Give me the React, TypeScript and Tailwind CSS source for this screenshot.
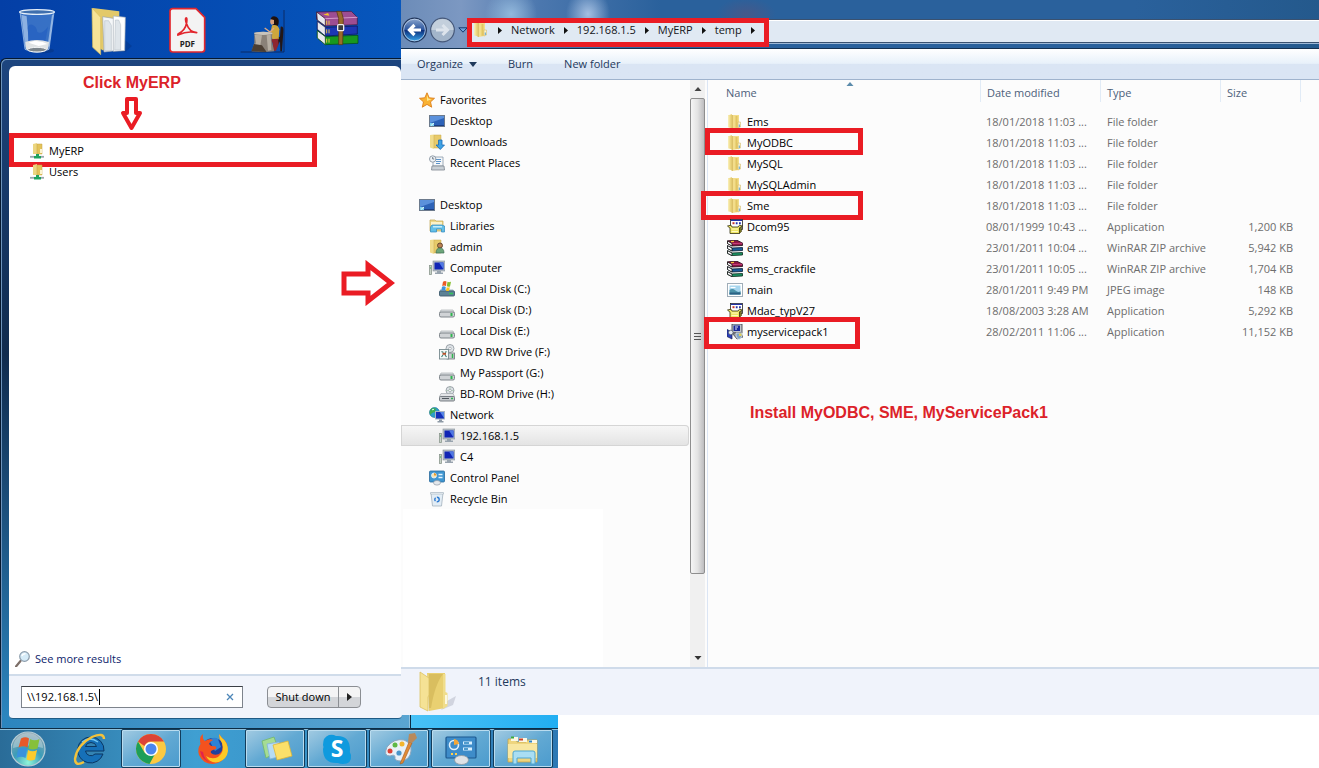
import type { ReactNode } from 'react';
import { clsx } from 'clsx';

/* ---------- small 16px icons ---------- */

function Icon({ children }: { children: ReactNode }) {
  return (
    <svg viewBox="0 0 16 16" className="h-4 w-4 shrink-0" aria-hidden="true">
      {children}
    </svg>
  );
}

function FolderIcon() {
  return (
    <Icon>
      <path d="M1 1.500 5 0v14.500l-4-1.500Z" fill="#ecd680" />
      <path d="M1 1.500 2.500 1v12.500L1 13Z" fill="#f7ebb0" />
      <path d="M5 1h7v13l-7 1Z" fill="#f3dd8a" />
      <path d="M5.200 1v14" stroke="#cdb057" strokeWidth=".9" />
      <path d="M8.500 2h2v11.500l-2 .5Z" fill="#e2c563" />
      <path d="M11 8h2.500v5L11 14Z" fill="#fbf4d0" stroke="#cdb25c" strokeWidth=".5" />
      <path d="M12.300 10.500v2.500" stroke="#5aa2cf" strokeWidth="1" />
    </Icon>
  );
}

function SharedFolderIcon() {
  return (
    <Icon>
      <path d="M4 1 8 0v11l-4 0Z" fill="#ecd680" />
      <path d="M8 1h5v10H8Z" fill="#e3c35a" stroke="#c4a145" strokeWidth=".5" />
      <path d="M11 6h2v4h-2Z" fill="#fbf4d0" />
      <path d="M1 13.800h14" stroke="#9aa7af" strokeWidth="1.800" />
      <path d="M7 11h3v2h2v2.500H5V13h2Z" fill="#1fa35c" />
    </Icon>
  );
}

function StarIcon() {
  return (
    <Icon>
      <path d="m8 .8 2.200 5 5.300.5-4 3.600 1.200 5.300L8 12.400l-4.700 2.800 1.200-5.300-4-3.600 5.300-.5Z" fill="#f9b233" stroke="#dd7f1c" strokeWidth=".9" strokeLinejoin="round" />
      <path d="m8 3 1.300 3.600 3.200.6L8 9Z" fill="#ffe88c" />
    </Icon>
  );
}

function DesktopIcon() {
  return (
    <Icon>
      <rect x=".5" y="2.500" width="15" height="11" fill="#2d63b8" stroke="#6c7a8c" />
      <path d="M1 3h14v2L1 10Z" fill="#5b91dc" />
      <path d="M1 12h14v1H1Z" fill="#1b3f86" />
      <path d="M1 10h4v3H1Z" fill="#7fd3ee" />
      <path d="M2 12.500 5 10" stroke="#fff" strokeWidth=".8" />
    </Icon>
  );
}

function DownloadsIcon() {
  return (
    <Icon>
      <path d="M1 1 5 .5V15l-4-1.500Z" fill="#f1dc8c" />
      <path d="M5 1h7v13H5Z" fill="#e8ca6a" stroke="#c9a94c" strokeWidth=".5" />
      <path d="M9.500 6h3.500v5h2.500L11.300 15.500 7 11h2.500Z" fill="#3ea2e5" stroke="#1c6bb5" strokeWidth=".8" />
    </Icon>
  );
}

function RecentIcon() {
  return (
    <Icon>
      <path d="M4 2h10v9H4Z" fill="#f4f7fa" stroke="#8c9aa8" strokeWidth=".8" />
      <path d="M7 4.500h5M7 6.500h5M7 8.500h4" stroke="#5d94c9" strokeWidth="1" />
      <path d="M3 11h12l.5 4h-13Z" fill="#c9d0d6" stroke="#7d8791" strokeWidth=".8" />
      <circle cx="3.700" cy="4" r="3.200" fill="#eef3f7" stroke="#8995a2" strokeWidth=".9" />
      <path d="M3.700 2v2h1.500" stroke="#55626f" strokeWidth=".8" fill="none" />
    </Icon>
  );
}

function LibrariesIcon() {
  return (
    <Icon>
      <path d="M1 2h5l1 1h7v10H1Z" fill="#eed98b" stroke="#bfa451" strokeWidth=".7" />
      <path d="M2 4h11v3H2Z" fill="#fbf2c9" />
      <path d="M3 7h10l2.500 1v6h-3v-3h-5v3h-6V9Z" fill="#62bfe8" stroke="#3188bd" strokeWidth=".7" />
      <path d="M4 8h9v1.500H4Z" fill="#c4ecfb" />
    </Icon>
  );
}

function UserFolderIcon() {
  return (
    <Icon>
      <path d="M1 1 5 .5V15l-4-1.500Z" fill="#f1dc8c" />
      <path d="M5 1h7v13H5Z" fill="#e8ca6a" stroke="#c9a94c" strokeWidth=".5" />
      <circle cx="11" cy="6.500" r="2.500" fill="#b98052" stroke="#5e4028" strokeWidth=".9" />
      <path d="M7 14c0-3.500 1.500-5 4-5s4 1.500 4 5Z" fill="#6ca57a" stroke="#3d6f53" strokeWidth=".7" />
    </Icon>
  );
}

function ComputerIcon() {
  return (
    <Icon>
      <rect x=".5" y="5.500" width="2" height="9" fill="#c9d3c9" stroke="#8a978d" strokeWidth=".8" />
      <path d="M1 8h1" stroke="#27b04a" />
      <rect x="4" y="1" width="12" height="10" fill="#b5bec7" stroke="#858f99" strokeWidth=".6" />
      <rect x="5.500" y="2.500" width="9" height="7" fill="#1125b5" />
      <path d="M10 2.500h4.500V9.500Z" fill="#4f78e3" />
      <path d="M8 11h4v1.500h2V14H6v-1.500h2Z" fill="#98a3ae" />
    </Icon>
  );
}

function DiskIcon() {
  return (
    <Icon>
      <path d="M2 8h12l1.500 3H.5Z" fill="#dfe2e4" stroke="#9ba1a6" strokeWidth=".6" />
      <rect x=".5" y="10" width="15" height="5" rx="1.500" fill="#d0d3d6" stroke="#757c82" strokeWidth=".9" />
      <path d="M12.500 11v3" stroke="#2fb44f" strokeWidth="2" />
    </Icon>
  );
}

function SystemDiskIcon() {
  return (
    <Icon>
      <path d="M1 8.500h13l1.500 2.500H.5Z" fill="#9fb3c4" />
      <rect x=".5" y="10" width="15" height="5" rx="1" fill="#5c8195" stroke="#3f5c6e" strokeWidth=".9" />
      <path d="M10 12.500h4" stroke="#34c45a" strokeWidth="1.600" />
      <path d="M4 .7Q6-.5 7.500.5L7 5Q5 4 3.200 5Z" fill="#ea5b26" />
      <path d="M8.500.8Q10 1.500 12 .7L11 5.400Q9.500 6 7.800 5.300Z" fill="#86bf2f" />
      <path d="M3 5.800Q5 4.900 6.800 5.900L6.200 9.500Q4 8.800 2.300 9.500Z" fill="#3e92db" />
      <path d="M7.700 6.200Q9 7 10.800 6.200L10 9.800Q8.500 10.300 7 9.700Z" fill="#fbc31a" />
    </Icon>
  );
}

function DvdIcon() {
  return (
    <Icon>
      <circle cx="11" cy="4.500" r="4" fill="#dfe4e8" stroke="#8a9299" strokeWidth=".8" />
      <circle cx="11" cy="4.500" r="1.300" fill="#fff" stroke="#8a9299" strokeWidth=".6" />
      <rect x="8" y="9" width="7.500" height="6" fill="#c9cdd0" stroke="#6e757b" strokeWidth=".8" />
      <path d="M13.500 10v4" stroke="#2fb44f" strokeWidth="1.500" />
      <rect x=".5" y="5.500" width="9" height="9.500" fill="#f5faf9" stroke="#788a8f" strokeWidth=".9" />
      <path d="m2.500 7.500 2 1M7.500 7.500l-1.500 1M2.500 13l1.500-2M7.500 13 6 11" stroke="#3e7d73" strokeWidth="1.200" fill="none" />
      <path d="M3.500 9.800h3.500" stroke="#b3522c" strokeWidth="2" />
    </Icon>
  );
}

function BdIcon() {
  return (
    <Icon>
      <circle cx="11" cy="4.500" r="4" fill="#dfe4e8" stroke="#8a9299" strokeWidth=".8" />
      <path d="M11 .5v8M7 4.500h8" stroke="#a9c3ae" strokeWidth=".8" />
      <circle cx="11" cy="4.500" r="1.300" fill="#fff" stroke="#8a9299" strokeWidth=".6" />
      <path d="M2 7.500h12l1.500 3H.5Z" fill="#e3e5e7" stroke="#9ba1a6" strokeWidth=".6" />
      <rect x=".5" y="10.500" width="15" height="4.500" rx="1" fill="#c5c9cc" stroke="#6e757b" strokeWidth=".9" />
      <path d="M3 12.500h7" stroke="#51585e" strokeWidth="1" />
      <path d="M12 12.500h2" stroke="#2fb44f" strokeWidth="1.400" />
    </Icon>
  );
}

function NetworkIcon() {
  return (
    <Icon>
      <circle cx="5.500" cy="5.500" r="5" fill="#2b9fc9" stroke="#1a6b94" strokeWidth=".6" />
      <path d="M2 2q3-2 5 0l-1 3-3 1-1.500 2Q-.5 5 2 2Z" fill="#3fae54" />
      <path d="M3 3q1-1 2-.5" stroke="#d8f5fb" fill="none" />
      <rect x="6.500" y="4.500" width="9" height="7.500" fill="#1330b8" stroke="#a9b6c4" />
      <path d="M11 5h4v6Z" fill="#5585e6" />
      <path d="M10 12.500h3v1.500h1.500v1.500H8.500V14H10Z" fill="#8d99a5" />
    </Icon>
  );
}

function ControlPanelIcon() {
  return (
    <Icon>
      <rect x=".5" y="1" width="15" height="11" rx="1" fill="#3f96d0" stroke="#2a6a9c" strokeWidth=".8" />
      <circle cx="5" cy="5.500" r="2.500" fill="#f4e4b4" stroke="#e9f6ff" strokeWidth=".8" />
      <path d="M5 5.500V3a2.500 2.500 0 0 1 2.500 2.500Z" fill="#e79a2c" />
      <path d="M9.500 4.500h4M9.500 7.500h4" stroke="#e2f3ff" strokeWidth="1.400" />
      <ellipse cx="8" cy="12.800" rx="3.500" ry="2.300" fill="#e4e8ec" stroke="#8f9aa5" strokeWidth=".7" />
    </Icon>
  );
}

function RecycleIcon() {
  return (
    <Icon>
      <path d="m2 2 1.500 13h9L14 2Z" fill="#e3edf5" stroke="#a3b1bd" strokeWidth=".8" />
      <path d="M1.500 1.500h13v1.500h-13Z" fill="#f7fafc" stroke="#a3b1bd" strokeWidth=".6" />
      <circle cx="8" cy="8.500" r="2.200" fill="none" stroke="#2d7ad1" strokeWidth="1.400" strokeDasharray="3.400 1.200" />
    </Icon>
  );
}

function InstallerIcon() {
  return (
    <Icon>
      <rect x="3.500" y=".5" width="12" height="10" fill="#fff" stroke="#222" strokeWidth=".8" />
      <path d="M4 1.400h11" stroke="#2433a8" strokeWidth="1.200" />
      <path d="M5.500 4.200h2" stroke="#c8332b" strokeWidth="2" />
      <path d="M8.800 4.200h1.800M12 4.200h1.800" stroke="#2433a8" strokeWidth="2" />
      <path d="M.5 7 4 6.200l1 1.800h6l1.500-1.800 3 .8-3 1.800v5.700H3V9.200Z" fill="#efe663" stroke="#33310f" strokeWidth=".8" strokeLinejoin="round" />
      <path d="M4.500 10h6.500M4.500 12.500h6.500" stroke="#fffbc2" strokeWidth="1.200" />
      <path d="M12.500 9v5.500l2-2V8Z" fill="#7c7622" stroke="#33310f" strokeWidth=".5" />
    </Icon>
  );
}

function RarIcon() {
  return (
    <Icon>
      <path d="M.5.800 10 .3l5.500 2.700v2.500L5 6 .5 3.500Z" fill="#8d1646" stroke="#1c0711" strokeWidth=".8" />
      <path d="M.5 1v2.500L5 6V3.500Z" fill="#fff" stroke="#111" strokeWidth=".8" />
      <path d="m5.500 3.600 10-.4" stroke="#d84e8b" strokeWidth=".8" />
      <path d="M.5 5.700 5 8l10.500-.5v3L5 11 .5 8.500Z" fill="#1b5b98" stroke="#081a33" strokeWidth=".8" />
      <path d="M.5 5.700v2.800L5 11V8Z" fill="#fff" stroke="#111" strokeWidth=".8" />
      <path d="M.5 10.700 5 13l10.500-.5V15L5 15.600l-4.500-2.300Z" fill="#1c9464" stroke="#082a1b" strokeWidth=".8" />
      <path d="M.5 10.700v2.600L5 15.600V13Z" fill="#fff" stroke="#111" strokeWidth=".8" />
      <path d="m4 1.600 3-.2" stroke="#f3c33c" strokeWidth="1.300" />
    </Icon>
  );
}

function ImageIcon() {
  return (
    <Icon>
      <rect x=".5" y="1.500" width="15" height="13" fill="#fff" stroke="#9fadb8" />
      <rect x="2.500" y="3.500" width="11" height="9" fill="#a5d5ee" />
      <path d="M2.500 8q3-2 6 .5t5 .5v3.500h-11Z" fill="#4a91a8" />
      <path d="M2.500 10.500h11v2h-11Z" fill="#2a6184" />
      <path d="M3.500 5.500h5" stroke="#fff" strokeWidth="1.200" />
    </Icon>
  );
}

function ServicePackIcon() {
  return (
    <Icon>
      <rect x="5" y="0" width="10" height="9" fill="#bfc4cb" stroke="#33363d" strokeWidth=".8" />
      <rect x="6.500" y="1.500" width="6.500" height="5.500" fill="#1b2a9b" />
      <path d="M8 3h3M8 5h2" stroke="#fff" strokeWidth=".9" />
      <path d="M5 9h9l2 4-6 2Z" fill="#8a9099" stroke="#33363d" strokeWidth=".7" />
      <path d="M0 5.500 5 8v7l-5-2.500Z" fill="#2b40c0" stroke="#161c4d" strokeWidth=".7" />
      <circle cx="3.800" cy="8.500" r="2.300" fill="#e3e9f0" stroke="#4b5563" strokeWidth=".7" />
      <path d="M9 9h6v3q-1 2.500-3 3.500-2-1-3-3.500Z" fill="#7fa3c6" stroke="#dfe6ec" strokeWidth=".8" />
      <path d="M12 9.500h2.500V12H12Z" fill="#e4cf56" />
    </Icon>
  );
}

/* ---------- desktop shortcuts ---------- */

function DesktopShortcut({ label, offset, children }: { label: string; offset: number; children: ReactNode }) {
  return (
    <button aria-label={label} className="h-[58px] w-[75px] shrink-0">
      <svg viewBox={`${offset} 0 225 174`} className="block h-full w-full">
        {children}
      </svg>
    </button>
  );
}

function DesktopShortcuts() {
  return (
    <div className="flex h-[58px] overflow-hidden">
      <DesktopShortcut label="Recycle Bin" offset={0}>
        <ellipse cx="128" cy="152" rx="34" ry="8" fill="#06327c" opacity=".5" />
        <path d="m60 36 15 112q36 18 72 0l15-112Z" fill="#6aa0e2" fillOpacity=".5" stroke="#bcd6f3" strokeWidth="2" />
        <path d="m64 44 12 98 12 5-8-98ZM156 44l-14 98 6-3 12-95Z" fill="#e4f1fd" opacity=".5" />
        <path d="M84 92q-4-20 12-18 14 4 16 22 14 8 32-16l-8 44H84Z" fill="#1f5cc0" opacity=".6" />
        <ellipse cx="111" cy="36" rx="52" ry="7" fill="#3f6fae" stroke="#e6f0fa" strokeWidth="4" />
        <path d="m76 126q34-12 71 0l-3 22q-32 14-66 0Z" fill="#dfe3e4" />
        <path d="m86 128 18-6 24 4 14 6-26 6Z" fill="#fff" />
        <ellipse cx="111" cy="149" rx="28" ry="7" fill="#7d868c" stroke="#f5f7f8" strokeWidth="3" />
      </DesktopShortcut>
      <DesktopShortcut label="Documents" offset={225}>
        <path d="m372 118 24 20-20 18h-40Z" fill="#06327c" opacity=".4" />
        <path d="m278 24 80 10v20l-48 98-30-20Z" fill="#e3c969" />
        <path d="m308 50 38 6v96l-34 4Z" fill="#f5f7f9" stroke="#98a3ae" strokeWidth="2" />
        <path d="m340 48 36 4-2 100-34 2Z" fill="#fff" stroke="#a8b1ba" strokeWidth="2" />
        <path d="M314 62h12l8 14v76h-20ZM346 60h10l6 14v76h-18Z" fill="#dfe5ea" stroke="#aeb8c1" strokeWidth="1.500" />
        <path d="m276 24 26 28v112l-24-22Z" fill="#f6e397" stroke="#d8bc5c" strokeWidth="2" />
      </DesktopShortcut>
      <DesktopShortcut label="PDF reader" offset={450}>
        <path d="M518 26h70l26 26v96q0 8-8 8h-88q-8 0-8-8V34q0-8 8-8Z" fill="#f3f3f3" stroke="#e2262d" strokeWidth="5" />
        <path d="M534 102q22-10 26-34 2-16-2-14t2 18q8 24 30 26-28-6-54 6-4 4-2-2Z" fill="none" stroke="#e2262d" strokeWidth="5" strokeLinejoin="round" />
        <text x="562" y="140" textAnchor="middle" className="fill-[#222] font-['Open_Sans'] text-[24px] font-bold">PDF</text>
      </DesktopShortcut>
      <DesktopShortcut label="Table" offset={675}>
        <path d="M722 156h130V30" fill="none" stroke="#0a2a66" strokeWidth="3" />
        <path d="M842 80q10-2 8 16l-4 58h-5l-1-30-16 28h-4l8-38 12-4Z" fill="#231717" />
        <path d="M812 56q4-10 16-6 10 4 8 18 0 10-6 12l-10-6Z" fill="#1f110d" />
        <path d="M812 58q-4 10 2 16l8-2v-12Z" fill="#d9a07b" />
        <path d="M816 76q18-4 22 12l-2 30-18 4-6-26Z" fill="#cfa63c" />
        <path d="m822 84-12 12-16-12" fill="none" stroke="#dca883" strokeWidth="4" />
        <path d="m812 118 22-2 2 16-8 20h-8l-2-22Z" fill="#8e2530" />
        <path d="M763 98q26-6 54 0l-2 24 8 32-26 2-42-2 8-26Z" fill="#8a8178" />
        <ellipse cx="790" cy="100" rx="28" ry="5" fill="#c9c4bc" />
        <path d="m764 104 4 24-12 24 22 2 8-48ZM800 106l4 46 10-2-2-46Z" fill="#b5ada2" />
        <path d="m762 132-8 22 46 2-14-20Z" fill="#4b3e33" />
      </DesktopShortcut>
      <DesktopShortcut label="WinRAR" offset={900}>
        <path d="m950 36 104-2 18 18v22l-96 4-26-20Z" fill="#9d4d92" stroke="#3c173a" strokeWidth="2" />
        <path d="m950 36 26 20v22l-24-18Z" fill="#e9e9ee" stroke="#241025" strokeWidth="2" />
        <path d="m976 56 96-4" stroke="#d59acb" strokeWidth="3" />
        <path d="m952 64 24 18 96-4v24l-96 6-24-20Z" fill="#1c36b4" stroke="#0c1450" strokeWidth="2" />
        <path d="m952 64 24 18v26l-24-20Z" fill="#e9e9ee" stroke="#0c1450" strokeWidth="2" />
        <path d="m952 92 24 18 98-4v24l-98 4-24-20Z" fill="#18981f" stroke="#064a0c" strokeWidth="2" />
        <path d="m952 92 24 18v24l-24-20Z" fill="#e9e9ee" stroke="#064a0c" strokeWidth="2" />
        <path d="M1010 34h14l6 22-2 78h-12V56Z" fill="#9b6a2b" stroke="#4c3110" strokeWidth="2" />
        <rect x="1013" y="74" width="18" height="18" rx="3" fill="#3b3b3b" stroke="#ececec" strokeWidth="4" />
        <path d="M980 62v12M987 62v12M980 88v12M987 88v12M980 116v12M987 116v12" stroke="#e6c548" strokeWidth="3" />
        <path d="m970 44 14-5 4 8Z" fill="#f2c72c" />
      </DesktopShortcut>
    </div>
  );
}

/* ---------- start menu ---------- */

function MenuResult({ label, marked }: { label: string; marked?: boolean }) {
  return (
    <button className="relative flex h-[21px] w-full items-center gap-1 pl-5 text-left">
      <SharedFolderIcon />
      <span>{label}</span>
      {marked && <span className="absolute -top-[7px] left-0 h-[34px] w-[308px] border-[5px] border-[#ea1c24]" />}
    </button>
  );
}

function StartMenu() {
  return (
    <div className="flex flex-1 flex-col rounded-tl-md border-t border-l border-[#06182e] bg-linear-to-b from-[#1d457f] via-[#102b4e] via-45% to-[#2b85be] pt-[7px] pl-2 shadow-[inset_1px_1px_0_#6d93bb]">
      <div className="flex flex-1 flex-col rounded-t-md bg-white">
        <div className="flex flex-col items-start pt-[7px] pl-[74px]">
          <h1 className="font-['Liberation_Sans',sans-serif] text-base leading-5 font-bold text-[#dc2229]">Click MyERP</h1>
          <svg viewBox="0 0 24 36" className="mt-[3px] ml-9 h-9 w-6">
            <path d="M8 3h9v14h4l-8.500 15L4 17h4Z" fill="#fff" stroke="#ea1c24" strokeWidth="4" strokeLinejoin="round" />
          </svg>
        </div>
        <div className="mt-2 flex flex-col">
          <MenuResult label="MyERP" marked />
          <MenuResult label="Users" />
        </div>
        <a href="#results" className="mt-auto flex h-[31px] items-center gap-1 px-[6px] text-[#0b1b6b]">
          <svg viewBox="0 0 16 16" className="h-4 w-4">
            <path d="M1 15.500 5.500 10" stroke="#7d6f68" strokeWidth="2.200" strokeLinecap="round" />
            <circle cx="9.500" cy="5.500" r="4.800" fill="#d5ebf8" stroke="#8c9cab" strokeWidth="1.200" />
            <path d="M6.800 5q1-2.500 3.700-2.300" stroke="#fff" strokeWidth="1.400" fill="none" />
          </svg>
          See more results
        </a>
        <div className="flex h-[41px] items-center border-t-2 border-[#d0dcea] bg-[#f1f4fb] pt-[2px] pl-3">
          <label className="relative flex h-[22px] w-[222px] items-center border border-[#7d838c] border-t-[#3b3f45] bg-white">
            <input aria-label="Search programs and files" defaultValue={'\\\\192.168.1.5\\'} className="min-w-0 flex-1 bg-transparent pl-[5px] outline-none" />
            <span className="absolute left-[77px] h-4 w-px bg-black" />
            <svg viewBox="0 0 8 8" className="mr-2 h-2 w-2">
              <path d="m1 1 6 6M7 1 1 7" stroke="#4d86b8" strokeWidth="1.300" />
            </svg>
          </label>
          <div className="ml-6 flex h-[22px] rounded-sm border border-[#8b8e93] bg-linear-to-b from-[#f4f4f5] from-50% to-[#d3d5d9] to-50%">
            <button className="w-[71px] border-r border-[#8b8e93]">Shut down</button>
            <button aria-label="More options" className="flex w-[21px] items-center justify-center">
              <svg viewBox="0 0 5 8" className="h-2 w-[5px]">
                <path d="m0 0 5 4-5 4Z" fill="#222" />
              </svg>
            </button>
          </div>
        </div>
      </div>
    </div>
  );
}

/* ---------- explorer ---------- */

function Crumb({ label }: { label?: string }) {
  return (
    <>
      {label && <button>{label}</button>}
      <svg viewBox="0 0 4 7" className="h-[7px] w-1">
        <path d="m0 0 4 3.500L0 7Z" fill="#111" />
      </svg>
    </>
  );
}

function AddressBar() {
  return (
    <div className="flex h-12 items-end bg-[radial-gradient(ellipse_26px_26px_at_110px_14px,#92b8dc,transparent),radial-gradient(ellipse_22px_26px_at_187px_14px,#a5c0e2,transparent),radial-gradient(ellipse_30px_16px_at_345px_14px,#45598a,transparent),linear-gradient(90deg,#6c8cb8,#7c98c2_60px,#4b77ae_140px,#2a619c_260px,#2a619c_80%,#24598c)] pb-[5px]">
      <div className="flex items-center">
        <button aria-label="Back">
          <svg viewBox="0 0 26 26" className="block h-[26px] w-[26px]">
            <defs>
              <linearGradient id="back" x1="0" y1="0" x2="0" y2="1">
                <stop offset="0" stopColor="#8fa9cf" />
                <stop offset=".48" stopColor="#2b559e" />
                <stop offset=".5" stopColor="#0b2b78" />
                <stop offset="1" stopColor="#38a9ee" />
              </linearGradient>
            </defs>
            <circle cx="13.500" cy="13" r="11.800" fill="url(#back)" stroke="#23375c" strokeWidth="1.300" />
            <circle cx="13.500" cy="13" r="10.800" fill="none" stroke="#c4d6ec" strokeWidth=".8" />
            <path d="M20 13H8.500m5-5-5 5 5 5" fill="none" stroke="#fff" strokeWidth="3.200" />
          </svg>
        </button>
        <button aria-label="Forward" className="ml-[2px]">
          <svg viewBox="0 0 26 26" className="block h-[26px] w-[26px]">
            <circle cx="13.500" cy="13" r="11.800" fill="#a3b5ca" stroke="#47597a" strokeWidth="1.200" />
            <path d="M2.500 13a11 11 0 0 1 22 0Z" fill="#c3cfdc" />
            <path d="M7 13h11.500m-5-5 5 5-5 5" fill="none" stroke="#dde4ec" strokeWidth="3" />
          </svg>
        </button>
        <button aria-label="Recent pages" className="ml-[3px]">
          <svg viewBox="0 0 10 6" className="h-[6px] w-[10px]">
            <path d="M.8.8h8.400L5 5.200Z" fill="#6fa3dc" stroke="#173a6e" strokeWidth="1" />
          </svg>
        </button>
      </div>
      <nav aria-label="Address" className="relative ml-[2px] flex h-6 flex-1 items-center gap-[9px] border-y border-[#3a516f] bg-[#e0e9f3] pb-[2px] pl-[3px] text-[#14161a] shadow-[inset_0_1px_0_#fff,0_1px_0_#9db8d6]">
        <FolderIcon />
        <Crumb />
        <Crumb label="Network" />
        <Crumb label="192.168.1.5" />
        <Crumb label="MyERP" />
        <Crumb label="temp" />
        <span className="absolute -top-[2px] left-[-3px] h-[29px] w-[302px] border-[5px] border-[#ea1c24]" />
      </nav>
    </div>
  );
}

function CommandBar() {
  return (
    <div className="flex h-8 items-center gap-[31px] border-t border-b border-t-[#14304f] border-b-[#9fb3cd] bg-linear-to-b from-white via-[#e8f1fa] via-48% to-[#dae5f4] to-50% pl-4 text-[#1e395b]">
      <button className="flex items-center gap-[6px]">
        Organize
        <svg viewBox="0 0 8 5" className="h-[5px] w-2">
          <path d="M0 0h8L4 5Z" fill="#1e395b" />
        </svg>
      </button>
      <button>Burn</button>
      <button>New folder</button>
    </div>
  );
}

interface TreeItemProps {
  icon: ReactNode;
  label: string;
  level?: 0 | 1 | 2;
  selected?: boolean;
}

const indent = ['pl-[18px]', 'pl-7', 'pl-[38px]'];

function TreeItem({ icon, label, level = 0, selected }: TreeItemProps) {
  return (
    <button
      className={clsx(
        'flex h-[21px] w-[288px] shrink-0 items-center gap-[5px] text-left',
        indent[level],
        selected && 'rounded-r-sm bg-linear-to-b from-[#f7f7f7] to-[#e3e3e3] shadow-[inset_0_0_0_1px_#d5d5d5]'
      )}
    >
      {icon}
      <span>{label}</span>
    </button>
  );
}

function NavigationPane() {
  return (
    <nav className="flex w-[289px] shrink-0 flex-col bg-[#fcfcfc] pt-[9px]">
      <TreeItem icon={<StarIcon />} label="Favorites" />
      <TreeItem icon={<DesktopIcon />} label="Desktop" level={1} />
      <TreeItem icon={<DownloadsIcon />} label="Downloads" level={1} />
      <TreeItem icon={<RecentIcon />} label="Recent Places" level={1} />
      <div className="h-[21px]" />
      <TreeItem icon={<DesktopIcon />} label="Desktop" />
      <TreeItem icon={<LibrariesIcon />} label="Libraries" level={1} />
      <TreeItem icon={<UserFolderIcon />} label="admin" level={1} />
      <TreeItem icon={<ComputerIcon />} label="Computer" level={1} />
      <TreeItem icon={<SystemDiskIcon />} label="Local Disk (C:)" level={2} />
      <TreeItem icon={<DiskIcon />} label="Local Disk (D:)" level={2} />
      <TreeItem icon={<DiskIcon />} label="Local Disk (E:)" level={2} />
      <TreeItem icon={<DvdIcon />} label="DVD RW Drive (F:)" level={2} />
      <TreeItem icon={<DiskIcon />} label="My Passport (G:)" level={2} />
      <TreeItem icon={<BdIcon />} label="BD-ROM Drive (H:)" level={2} />
      <TreeItem icon={<NetworkIcon />} label="Network" level={1} />
      <TreeItem icon={<ComputerIcon />} label="192.168.1.5" level={2} selected />
      <TreeItem icon={<ComputerIcon />} label="C4" level={2} />
      <TreeItem icon={<ControlPanelIcon />} label="Control Panel" level={1} />
      <TreeItem icon={<RecycleIcon />} label="Recycle Bin" level={1} />
      <div className="ml-[2px] w-[200px] flex-1 bg-white" />
    </nav>
  );
}

function ScrollTrack() {
  return (
    <div className="flex w-[15px] shrink-0 flex-col items-center bg-[#f0f0f0]">
      <svg viewBox="0 0 8 4" className="my-[7px] h-1 w-2">
        <path d="m4 0 3.500 4h-7Z" fill="#444" />
      </svg>
      <div className="flex w-full flex-[477] flex-col items-center justify-center gap-[2px] rounded-xs border border-[#8e8e8e] bg-linear-to-r from-[#f5f5f5] via-[#e3e3e3] to-[#bdbdc0]">
        <span className="h-px w-[7px] bg-[#555]" />
        <span className="h-px w-[7px] bg-[#555]" />
        <span className="h-px w-[7px] bg-[#555]" />
      </div>
      <div className="flex-[78]" />
      <svg viewBox="0 0 8 4" className="mt-1 mb-[7px] h-1 w-2">
        <path d="m4 4 3.500-4h-7Z" fill="#333" />
      </svg>
    </div>
  );
}

interface FileRow {
  name: string;
  date: string;
  type: string;
  size?: string;
  icon: ReactNode;
  mark?: string;
}

const files: FileRow[] = [
  { name: 'Ems', date: '18/01/2018 11:03 ...', type: 'File folder', icon: <FolderIcon /> },
  { name: 'MyODBC', date: '18/01/2018 11:03 ...', type: 'File folder', icon: <FolderIcon />, mark: '-top-1 -left-[3px] h-[27px] w-[158px]' },
  { name: 'MySQL', date: '18/01/2018 11:03 ...', type: 'File folder', icon: <FolderIcon /> },
  { name: 'MySQLAdmin', date: '18/01/2018 11:03 ...', type: 'File folder', icon: <FolderIcon /> },
  { name: 'Sme', date: '18/01/2018 11:03 ...', type: 'File folder', icon: <FolderIcon />, mark: '-top-1 -left-[7px] h-[29px] w-[162px]' },
  { name: 'Dcom95', date: '08/01/1999 10:43 ...', type: 'Application', size: '1,200 KB', icon: <InstallerIcon /> },
  { name: 'ems', date: '23/01/2011 10:04 ...', type: 'WinRAR ZIP archive', size: '5,942 KB', icon: <RarIcon /> },
  { name: 'ems_crackfile', date: '23/01/2011 10:05 ...', type: 'WinRAR ZIP archive', size: '1,704 KB', icon: <RarIcon /> },
  { name: 'main', date: '28/01/2011 9:49 PM', type: 'JPEG image', size: '148 KB', icon: <ImageIcon /> },
  { name: 'Mdac_typV27', date: '18/08/2003 3:28 AM', type: 'Application', size: '5,292 KB', icon: <InstallerIcon /> },
  { name: 'myservicepack1', date: '28/02/2011 11:06 ...', type: 'Application', size: '11,152 KB', icon: <ServicePackIcon />, mark: '-top-1 -left-1 h-8 w-[156px]' },
];

function FileList() {
  return (
    <div className="min-w-0 flex-1 border-l border-[#dbe5f4] bg-[#fcfcfc]">
      <table className="w-full table-fixed text-left">
        <colgroup>
          <col className="w-[272px]" />
          <col className="w-[120px]" />
          <col className="w-[120px]" />
          <col className="w-[80px]" />
          <col />
        </colgroup>
        <thead>
          <tr className="h-[31px] text-[#4c607a]">
            <th className="relative p-0 pl-[18px] align-top font-normal">
              <div className="pt-[5px] leading-4">Name</div>
              <svg viewBox="0 0 8 4" className="absolute top-[2px] left-[138px] h-1 w-2">
                <path d="m4 0 3.500 4h-7Z" fill="#5b8bab" />
              </svg>
            </th>
            {['Date modified', 'Type', 'Size'].map((title) => (
              <th key={title} className="p-0 align-top font-normal">
                <div className="h-[22px] border-l border-[#e1ebf6] pt-[5px] pl-[6px] leading-4">{title}</div>
              </th>
            ))}
            <th aria-hidden="true" className="p-0 align-top">
              <div className="h-[22px] border-l border-[#e1ebf6]" />
            </th>
          </tr>
        </thead>
        <tbody>
          {files.map(({ name, date, type, size, icon, mark }) => (
            <tr key={name} className="h-[21px] text-[#6d6d6d]">
              <td className="relative p-0 text-black">
                <div className="flex items-center gap-1 pl-[19px]">
                  {icon}
                  <span>{name}</span>
                </div>
                {mark && <span className={clsx('absolute border-[5px] border-[#ea1c24]', mark)} />}
              </td>
              <td className="p-0 pl-[6px] whitespace-nowrap">{date}</td>
              <td className="p-0 pl-[7px] whitespace-nowrap">{type}</td>
              <td className="p-0 pr-[7px] text-right whitespace-nowrap">{size}</td>
              <td />
            </tr>
          ))}
        </tbody>
      </table>
      <p className="mt-[61px] ml-[42px] font-['Liberation_Sans',sans-serif] text-base leading-5 font-bold text-[#dc2229]">
        Install MyODBC, SME, MyServicePack1
      </p>
    </div>
  );
}

function DetailsPane() {
  return (
    <footer className="flex h-12 items-start border-t-2 border-[#cfdbea] bg-[#f0f3fb] pl-[18px] text-xs text-[#1e395b]">
      <svg viewBox="0 0 40 44" className="h-11 w-10">
        <path d="m28 32 9-5-3 9-12 5Z" fill="#aab0bc" opacity=".45" />
        <path d="M8 4h18v35l-16 3Z" fill="#e9d071" />
        <path d="M10 5h14q-8 10-12 34h-2Z" fill="#c5a84a" opacity=".45" />
        <path d="M24 5h2.500v18l2 1v13l-4.500 3Z" fill="#f0dd8b" />
        <path d="M26 26h2v9h-2Z" fill="#fdf9e0" />
        <path d="m1 3 9 6v17l-1 2v14l-8-4Z" fill="#f5e295" stroke="#dcc263" strokeWidth=".8" />
      </svg>
      <p className="mt-[5px] ml-[19px]">11 items</p>
    </footer>
  );
}

function Explorer() {
  return (
    <main className="relative flex min-w-0 flex-1 flex-col">
      <AddressBar />
      <CommandBar />
      <div className="flex flex-1">
        <NavigationPane />
        <ScrollTrack />
        <div className="w-[2px] bg-[#fcfcfc]" />
        <FileList />
      </div>
      <DetailsPane />
      <svg viewBox="0 0 54 46" className="absolute top-[260px] -left-[60px] h-[46px] w-[54px]">
        <path d="M3 14h24V5l23 18-23 18v-8H3Z" fill="#fff" stroke="#ea1c24" strokeWidth="5" />
      </svg>
    </main>
  );
}

/* ---------- taskbar ---------- */

function TaskButton({ label, running, children }: { label: string; running?: boolean; children: ReactNode }) {
  return (
    <button
      aria-label={label}
      className={clsx(
        'flex w-[60px] shrink-0 items-center justify-center rounded-xs',
        running && 'border border-[#123d5c] bg-linear-to-br from-[#a2cbe2] via-[#62a9d3] to-[#4b9bcd] shadow-[inset_0_0_0_1px_#b9dcef]'
      )}
    >
      <svg viewBox="0 0 36 36" className="h-9 w-9">
        {children}
      </svg>
    </button>
  );
}

function Taskbar() {
  return (
    <div className="flex h-10 w-[558px] gap-[2px] border-t border-[#0d2c44] bg-linear-to-r from-[#2a6c98] via-[#3f9fd2] via-35% to-[#2c78b4] shadow-[inset_0_1px_0_#8fc1dd]">
      <button aria-label="Start" className="flex w-[57px] shrink-0 items-center justify-center">
        <svg viewBox="0 0 36 36" className="h-9 w-9">
          <defs>
            <radialGradient id="orb" cx=".5" cy=".9" r=".85">
              <stop offset="0" stopColor="#8ff5d8" />
              <stop offset=".5" stopColor="#3b9cb8" />
              <stop offset="1" stopColor="#8aa5b1" />
            </radialGradient>
          </defs>
          <circle cx="17" cy="18" r="17" fill="url(#orb)" stroke="#b5ccd6" strokeWidth="1.200" />
          <path d="M2 17a15 15 0 0 1 30 0Q17 12 2 17Z" fill="#fff" opacity=".3" />
          <path d="M10 7.500q4.500-2.500 8 0l-1.500 9q-4-2.500-9 0Z" fill="#e8592a" />
          <path d="M19 8q4.500 2.500 9.500 0l-2 9.500q-4.500 2-9 0Z" fill="#86c03a" />
          <path d="M7 18q4.500-2.500 9 0l-1.500 9q-4.500-2.500-9 0Z" fill="#3992dc" />
          <path d="M17 19q4.500 2.500 9 0l-2 9.500q-4.500 2-8.500 0Z" fill="#fccb2b" />
        </svg>
      </button>
      <TaskButton label="Internet Explorer">
        <path d="M20 6a13 13 0 1 0 12 17h-8a5.500 5.500 0 0 1-9.500-3H33A13 13 0 0 0 20 6Zm-5.500 9.500q1-4 5.500-4t5.500 4Z" fill="#1670b8" stroke="#0b3763" strokeWidth="1" />
        <path d="M11 11q8-6 16 0" stroke="#72c6f3" strokeWidth="1.500" fill="none" />
        <path d="M33 8Q33 1 21 6 6 14 4 28q0 8 9 3" fill="none" stroke="#f2c23c" strokeWidth="2.400" />
      </TaskButton>
      <TaskButton label="Chrome" running>
        <circle cx="18" cy="18" r="15" fill="#fbc942" />
        <path d="M5 10.500a15 15 0 0 1 26 0H18a7.500 7.500 0 0 0-6.600 4.600Z" fill="#dc4437" />
        <path d="M5 10.500a15 15 0 0 0 11.500 22.400l6.300-11.500a7.500 7.500 0 0 1-11.300 0Z" fill="#1d9e58" />
        <circle cx="18" cy="18" r="7" fill="#fff" />
        <circle cx="18" cy="18" r="5.500" fill="#4b86ee" />
      </TaskButton>
      <TaskButton label="Firefox">
        <circle cx="18" cy="19" r="12" fill="#21429c" />
        <path d="M14 9q5-4 9-1l3 8-6 4Z" fill="#2e82d6" />
        <path d="M5 9q0 2 .5 4Q2 18 4 24q4 9 14 9 11-1 14-12 2-10-5-14l-3-4q0 5 3 9 2 8-3 11-5 2-8-1-1-2 2-3l3-1q1-2-1-3-4 1-6-2 1-3 4-4-4-2-8 1Q7 8 8 3 5 5 5 9Z" fill="#f4521e" />
        <path d="M24 3q0 5 3 9 3 9-4 14-6 3-12-1 4 8 13 6 8-3 9-11 0-9-6-13Z" fill="#fdc926" />
        <path d="M5 20q2 10 12 12-8-2-9-11Z" fill="#e3224c" />
      </TaskButton>
      <TaskButton label="Sticky Notes" running>
        <path d="m5 10 12-4 5 14-13 7Z" fill="#a5dc94" stroke="#72b86a" strokeWidth=".8" />
        <path d="m10 13 12-2 3 14-12 3Z" fill="#b5dcf5" stroke="#82b4db" strokeWidth=".8" />
        <path d="m16 14 15-4 4 15-15 4Z" fill="#fbe06a" stroke="#dcb53a" strokeWidth=".8" />
      </TaskButton>
      <TaskButton label="Skype" running>
        <path d="M10 4q4-1 7 1 14-1 14 14-1 2 1 5 1 9-8 9-3 0-5-1-15 1-15-14 1-2 0-4 0-8 6-10Z" fill="#0f9ade" />
        <text x="18" y="26" textAnchor="middle" className="fill-white font-['Open_Sans'] text-[23px] font-bold">S</text>
      </TaskButton>
      <TaskButton label="Paint" running>
        <path d="M6 16q7-9 17-7 8 3 7 11-1 9-10 10-7 0-6-4 0-3-5-1-7 0-3-9Z" fill="#e9f1f8" stroke="#91a8bd" strokeWidth="1" />
        <circle cx="9" cy="20" r="2.500" fill="#dc4236" />
        <circle cx="14" cy="14" r="2.500" fill="#5fb846" />
        <circle cx="21" cy="13" r="2.500" fill="#f3b52d" />
        <circle cx="18" cy="22" r="2.600" fill="#4a95c9" />
        <path d="m19 33 9-22 3 1-9 20Z" fill="#e08a36" stroke="#a85d1d" strokeWidth=".6" />
        <path d="m27 11 1-8 6-1 2 5-5 5Z" fill="#b98a5c" />
      </TaskButton>
      <TaskButton label="Control Panel" running>
        <rect x="3" y="6" width="30" height="21" rx="1" fill="#3e8cc9" stroke="#1d598f" strokeWidth="1.200" />
        <circle cx="11" cy="14" r="4.500" fill="none" stroke="#def0fc" strokeWidth="1.600" />
        <path d="M11 14V8a6 6 0 0 1 5 5Z" fill="#f2a738" />
        <path d="M20 12h9M20 18h9" stroke="#d8f0ff" strokeWidth="3" />
        <path d="M21 12h5M21 18h4" stroke="#2380bf" strokeWidth="1.500" />
        <path d="M8 23h2M12 23h2" stroke="#ffd04e" strokeWidth="2" />
        <ellipse cx="18.500" cy="29" rx="7" ry="4.500" fill="#dfe2e6" stroke="#8f989f" strokeWidth=".8" />
      </TaskButton>
      <TaskButton label="Windows Explorer" running>
        <path d="M3 8h8l1 3h9l1-2h10v22H3Z" fill="#eed57e" stroke="#c6a44a" strokeWidth=".8" />
        <path d="M6 6h7v4H6ZM14 7h8v4h-8ZM24 9h8v3h-8Z" fill="#fbf8e6" />
        <path d="M6 6.500h3" stroke="#3eaa3c" strokeWidth="2" />
        <path d="M14 8.500h4" stroke="#cf4227" strokeWidth="2" />
        <path d="M24 10.500h3" stroke="#2f84c6" strokeWidth="2" />
        <path d="M3 13h29v14H3Z" fill="#f8e7a1" />
        <path d="M8 22q0-2 2-2h18q2 0 2 2v11h-4v-6H12v6H8Z" fill="#a9def3" stroke="#4ea6d1" strokeWidth="1" />
      </TaskButton>
    </div>
  );
}

export default function App() {
  return (
    <div className="flex min-h-screen flex-col bg-white font-['Open_Sans','Noto_Sans',sans-serif] text-[11px] leading-4 text-black">
      <div className="flex flex-1">
        <aside className="flex w-[401px] shrink-0 flex-col bg-linear-to-r from-[#043fa6] to-[#0757bd]">
          <DesktopShortcuts />
          <StartMenu />
        </aside>
        <Explorer />
      </div>
      <div className="flex h-[13px] w-[558px] bg-linear-to-r from-[#4cc4f7] from-70% to-[#21aef2]">
        <div className="w-[411px] border-r border-l border-[#0d2c44] bg-linear-to-r from-[#2b85be] to-[#5aa5d2] pr-2 pl-2 shadow-[inset_1px_0_0_#6d93bb,inset_-1px_0_0_#8fc1dd]">
          <div className="h-1 rounded-b-md border-b border-[#1f5b85] bg-[#f1f4fb]" />
        </div>
      </div>
      <Taskbar />
    </div>
  );
}
